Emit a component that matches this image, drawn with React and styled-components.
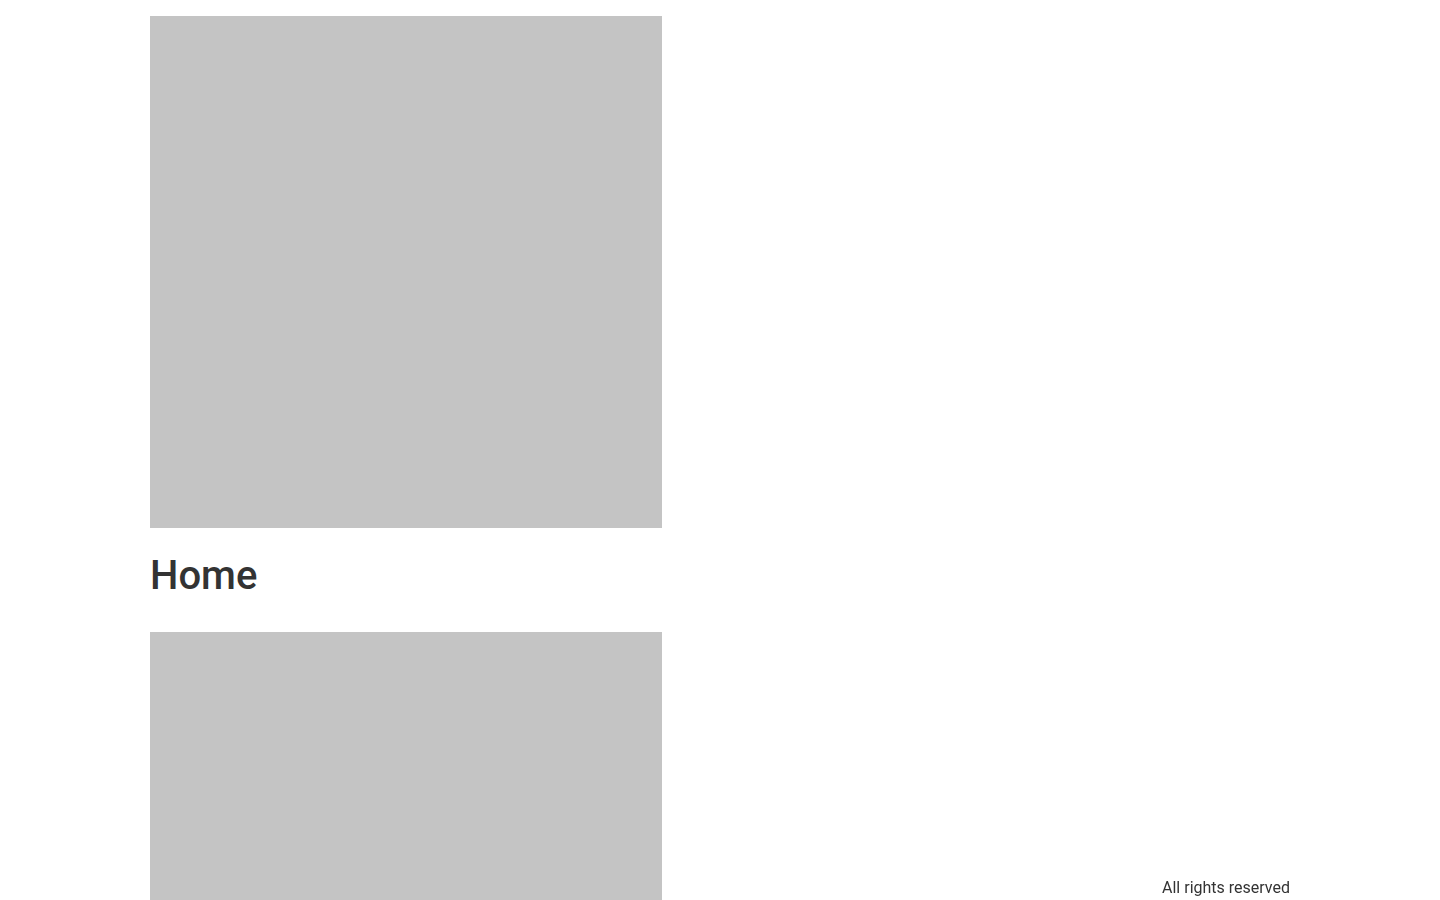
import React from 'react';
import styled, { createGlobalStyle } from 'styled-components';

const GlobalStyle = createGlobalStyle`
  * {
    box-sizing: border-box;
  }
  body {
    margin: 0;
    background: #fff;
    color: #333;
    font-family: Roboto, "Liberation Sans", Arial, sans-serif;
  }
`;

const Page = styled.div`
  max-width: 1140px;
  margin: 0 auto;
  padding-top: 16px;
`;

const Placeholder = styled.div`
  width: 512px;
  height: 512px;
  background: #c4c4c4;
`;

const Title = styled.h1`
  margin: 24px 0 32px;
  font-size: 40px;
  line-height: 48px;
  font-weight: 500;
  color: #333;
`;

const Footer = styled.footer`
  position: fixed;
  left: 0;
  right: 0;
  bottom: 0;
  pointer-events: none;
`;

const FooterInner = styled.div`
  max-width: 1140px;
  margin: 0 auto;
  text-align: right;
  font-size: 16px;
  line-height: 24px;
  color: #333;
`;

export default function App() {
  return (
    <>
      <GlobalStyle />
      <Page>
        <Placeholder />
        <Title>Home</Title>
        <Placeholder />
      </Page>
      <Footer>
        <FooterInner>All rights reserved</FooterInner>
      </Footer>
    </>
  );
}
